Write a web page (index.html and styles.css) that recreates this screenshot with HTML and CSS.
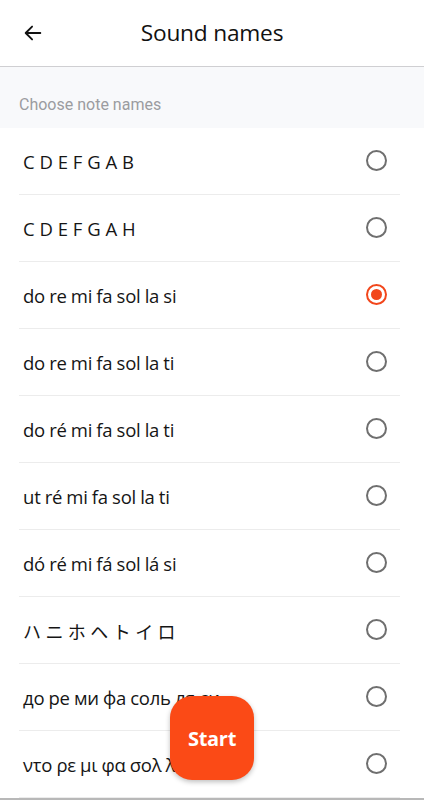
FILE: index.html
```html
<!DOCTYPE html>
<html lang="en">
<head>
<meta charset="utf-8">
<title>Sound names</title>
<link rel="stylesheet" href="styles.css">
</head>
<body>
<div class="screen">
  <header class="topbar">
    <span class="back">
      <svg width="22" height="22" viewBox="0 0 24 24"><path d="M20 12H4.5M11 5l-7 7 7 7" fill="none" stroke="#111" stroke-width="2" stroke-linecap="round" stroke-linejoin="round"/></svg>
    </span>
    <h1 class="title">Sound names</h1>
  </header>
  <div class="section">Choose note names</div>
  <ul class="list">
    <li class="row"><span class="label caps">C D E F G A B</span><span class="radio"></span></li>
    <li class="row"><span class="label caps">C D E F G A H</span><span class="radio"></span></li>
    <li class="row"><span class="label">do re mi fa sol la si</span><span class="radio on"></span></li>
    <li class="row"><span class="label">do re mi fa sol la ti</span><span class="radio"></span></li>
    <li class="row"><span class="label">do ré mi fa sol la ti</span><span class="radio"></span></li>
    <li class="row"><span class="label">ut ré mi fa sol la ti</span><span class="radio"></span></li>
    <li class="row"><span class="label">dó ré mi fá sol lá si</span><span class="radio"></span></li>
    <li class="row"><span class="label jp">ハ ニ ホ ヘ ト イ ロ</span><span class="radio"></span></li>
    <li class="row"><span class="label">до ре ми фа соль ля си</span><span class="radio"></span></li>
    <li class="row"><span class="label">ντο ρε μι φα σολ λα σι</span><span class="radio"></span></li>
  </ul>
  <button class="start">Start</button>
</div>
</body>
</html>
```
FILE: styles.css
```css
* { box-sizing: border-box; }
html, body { margin: 0; padding: 0; background: #fff; }
body { font-family: "Open Sans", "Noto Sans", sans-serif; color: #111; }
.screen { position: relative; width: 424px; height: 800px; overflow: hidden; border-bottom: 2px solid #b8b8b8; }
.topbar { height: 67px; display: flex; align-items: center; border-bottom: 1px solid #cfcfd2; position: relative; }
.back { width: 22px; height: 22px; margin-left: 22px; margin-top: -1px; display: flex; }
.title { position: absolute; left: 0; right: 0; text-align: center; margin: 0; font-size: 22.7px; font-weight: 400; letter-spacing: -0.2px; pointer-events: none; top: 17px; line-height: 32px; }
.section { height: 61px; background: #f8f9fb; color: #9b9ca0; font-family: Roboto, sans-serif; font-size: 16px; padding: 28px 0 0 19px; line-height: 19px; }
.list { list-style: none; margin: 0; padding: 0 24px 0 19px; }
.row { height: 67px; display: flex; align-items: center; justify-content: space-between; border-bottom: 1px solid #ececec; padding: 0 0 0 4px; }
.label { font-size: 18.5px; line-height: 22px; color: #151515; letter-spacing: -0.2px; word-spacing: -0.5px; margin-top: 1px; }
.label.caps { letter-spacing: 0; word-spacing: 0; }
.label.jp { font-family: "Noto Sans CJK JP", sans-serif; font-weight: 400; font-size: 18px; letter-spacing: 0.2px; word-spacing: 0; }
.radio { width: 21px; height: 21px; border-radius: 50%; border: 2px solid #6f6f6f; margin-right: 13px; margin-top: -1px; display: flex; align-items: center; justify-content: center; flex: none; }
.radio.on { border-color: #f2461b; }
.radio.on::after { content: ""; width: 11px; height: 11px; border-radius: 50%; background: #f2461b; }
.start { position: absolute; left: 170px; top: 696px; width: 84px; height: 84px; border-radius: 22px; border: none; background: #fb4a16; color: #fff; font-family: "Open Sans", sans-serif; font-weight: 700; font-size: 20px; letter-spacing: -0.3px; box-shadow: 0 2px 5px rgba(0,0,0,0.25); padding: 0; }
```
